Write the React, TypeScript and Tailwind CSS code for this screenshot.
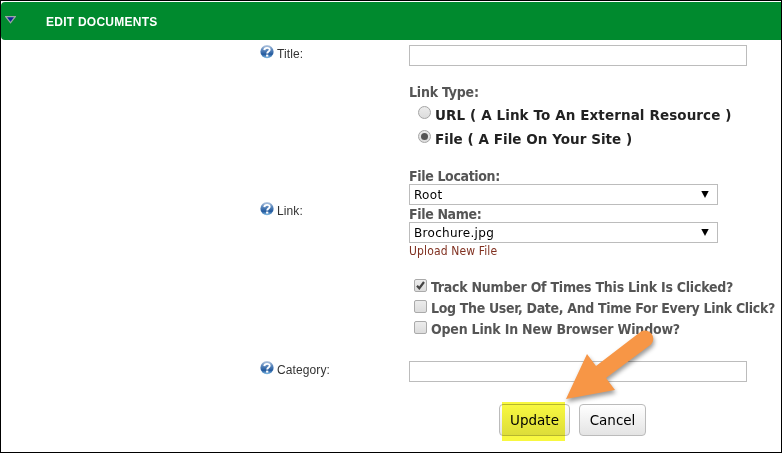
import type { ReactNode } from "react";

const ui = "font-['DejaVu_Sans_Condensed','DejaVu_Sans',sans-serif] [font-stretch:condensed]";
const wide = "font-['DejaVu_Sans',Verdana,sans-serif] [font-stretch:normal]";

function HelpIcon({ id }: { id: string }) {
  return (
    <svg className="h-[14px] w-[14px] shrink-0" viewBox="0 0 14 14">
      <defs>
        <linearGradient id={id} x1="0" y1="0" x2="0" y2="1">
          <stop offset="0" stopColor="#b9cbe2" />
          <stop offset="0.35" stopColor="#5c88bd" />
          <stop offset="0.7" stopColor="#235a9e" />
          <stop offset="1" stopColor="#86c0e8" />
        </linearGradient>
      </defs>
      <circle cx="7" cy="6.7" r="6.6" fill={`url(#${id})`} />
      <path d="M4.3 5.1C4.5 2.2 9.7 2.1 9.7 4.8C9.7 6.7 7.2 6.5 7.2 8.6" fill="none" stroke="#fff" strokeWidth="1.9" />
      <rect x="6.1" y="9.6" width="2.2" height="2" fill="#fff" />
    </svg>
  );
}

function Label({ children, id }: { children: ReactNode; id: string }) {
  return (
    <div className="flex h-[14px] w-[149px] shrink-0 items-center gap-[3px] font-['Liberation_Sans',Arial,sans-serif] text-[12px] leading-[14px] text-[#333]">
      <HelpIcon id={id} />
      <span className="relative top-[2px] tracking-[0.1px]">{children}</span>
    </div>
  );
}

function SelectBox({ children }: { children: ReactNode }) {
  return (
    <div className={`flex h-[21px] w-[309px] items-center justify-between border border-[#bcbcbc] pr-[8px] pl-1 text-[12px] tracking-[0.3px] text-black ${wide}`}>
      <span>{children}</span>
      <svg className="h-[7px] w-[8px]" viewBox="0 0 8 7">
        <path d="M0.3 0H7.7L4 7Z" fill="#000" />
      </svg>
    </div>
  );
}

function Radio({ on, className, children }: { on?: boolean; className: string; children: ReactNode }) {
  return (
    <div className={`flex h-6 items-center gap-1 pl-[9px] text-[13.5px] font-bold text-[#222] ${wide}`}>
      <span className="mb-px flex h-[13px] w-[13px] shrink-0 items-center justify-center rounded-full border border-[#a5a5a5] bg-gradient-to-b from-[#ececec] to-[#dcdcdc]">
        {on && <span className="h-[7px] w-[7px] rounded-full bg-[#555]" />}
      </span>
      <span className={`relative top-[2px] whitespace-nowrap ${className}`}>{children}</span>
    </div>
  );
}

function Check({ on, className, children }: { on?: boolean; className: string; children: ReactNode }) {
  return (
    <div className="flex h-[21px] items-center gap-1 pl-[5px] text-[14px] font-bold text-[#555]">
      <span className="h-[13px] w-[13px] shrink-0 rounded-[2px] border border-[#aaa] bg-gradient-to-b from-[#ececec] to-[#dcdcdc]">
        {on && (
          <svg className="h-[11px] w-[11px]" viewBox="0 0 11 11">
            <path d="M2 5.7L4.3 8.2L9 2" fill="none" stroke="#444" strokeWidth="2.2" />
          </svg>
        )}
      </span>
      <span className={`relative top-[2px] whitespace-nowrap ${className}`}>{children}</span>
    </div>
  );
}

export default function App() {
  return (
    <div className={`relative h-[453px] w-[782px] overflow-hidden border border-black bg-white pt-px ${ui}`}>
      <header className="flex h-[38px] items-center rounded-l-[4px] bg-[#008a2e] pl-1 text-white">
        <svg className="mb-[2px] h-[8px] w-[11px]" viewBox="0 0 11 8">
          <path d="M0.8 0.7H10.2L5.5 6.8Z" fill="#10259b" stroke="#9aa6a3" strokeWidth="1.3" />
        </svg>
        <h1 className="ml-[30px] pt-[2px] font-['Liberation_Sans',Arial,sans-serif] text-[12px] font-bold tracking-[0.25px]">EDIT DOCUMENTS</h1>
      </header>

      <form className="pt-[5px] pl-[259px]">
        <div className="flex h-[38px] items-start">
          <Label id="title">Title:</Label>
          <input className="h-[21px] w-[338px] border border-[#bcbcbc]" />
        </div>

        <div className="flex h-[278px] items-start">
          <div className="pt-[119px]">
            <Label id="link">Link:</Label>
          </div>
          <div className="flex flex-col">
            <p className="h-[18px] text-[14px] leading-[18px] font-bold tracking-[-0.2px] text-[#555]">Link Type:</p>
            <Radio className="tracking-[0.1px]">URL ( A Link To An External Resource )</Radio>
            <Radio on className="tracking-[0.04px]">File ( A File On Your Site )</Radio>
            <p className="mt-[18px] h-[17px] text-[14px] leading-[18px] font-bold tracking-[-0.35px] text-[#555]">File Location:</p>
            <SelectBox>Root</SelectBox>
            <p className="h-[17px] text-[14px] leading-[18px] font-bold tracking-[-0.35px] text-[#555]">File Name:</p>
            <SelectBox>Brochure.jpg</SelectBox>
            <a className="h-[32px] text-[12px] leading-[17px] tracking-[0.13px] text-[#803020]">Upload New File</a>
            <Check on className="tracking-[-0.24px]">Track Number Of Times This Link Is Clicked?</Check>
            <Check className="tracking-[-0.33px]">Log The User, Date, And Time For Every Link Click?</Check>
            <Check className="tracking-[-0.2px]">Open Link In New Browser Window?</Check>
          </div>
        </div>

        <div className="flex h-[43px] items-start">
          <Label id="category">Category:</Label>
          <input className="h-[21px] w-[338px] border border-[#bcbcbc]" />
        </div>

        <div className={`flex gap-[9px] pl-[239px] text-[13.5px] text-black ${wide}`}>
          <button type="button" className="h-8 w-[71px] rounded-[4px] border border-[#bbb] bg-gradient-to-b from-white to-[#e4e4e4]">Update</button>
          <button type="button" className="h-8 w-[67px] rounded-[4px] border border-[#bbb] bg-gradient-to-b from-white to-[#e4e4e4]">Cancel</button>
        </div>
      </form>

      <div className="absolute top-[401px] left-[501px] h-[39px] w-[63px] bg-[#f8f840] mix-blend-multiply" />
      <svg className="absolute top-[319px] left-[549px] h-[100px] w-[120px] drop-shadow-[1px_3px_2px_rgba(0,0,0,0.4)]" viewBox="550 320 120 100">
        <path d="M566 399L587 354L596 366L641 331.5A8.3 8.3 0 0 1 651 344.5L606 378L615 390Z" fill="#f79646" />
      </svg>
    </div>
  );
}
